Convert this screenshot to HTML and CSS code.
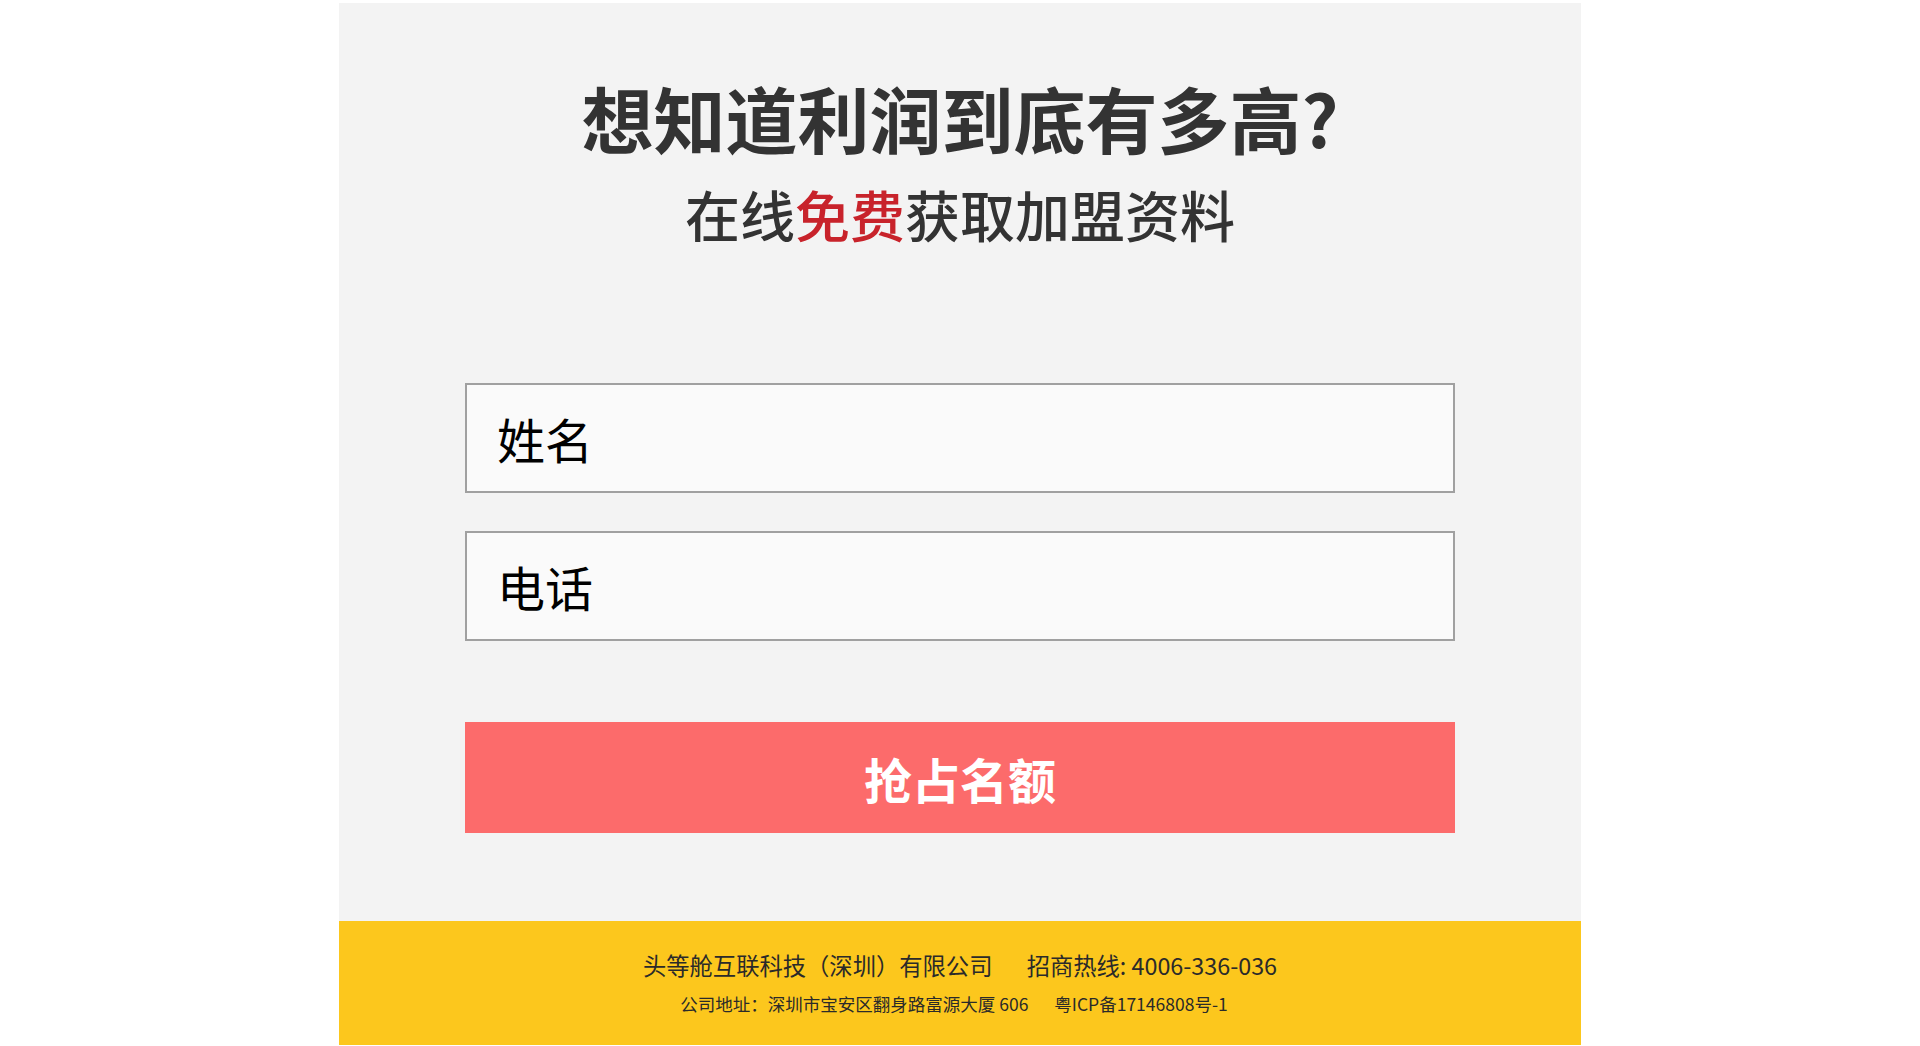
FILE: index.html
```html
<!DOCTYPE html>
<html lang="zh-CN">
<head>
    <meta charset="UTF-8">
    <meta name="viewport" content="width=device-width, initial-scale=1.0">
    <title>免费获取加盟资料</title>
    <link rel="stylesheet" href="styles.css">
</head>
<body>
    <div class="page">
        <div class="apply">
            <h1 class="apply-title">想知道利润到底有多高?</h1>
            <h2 class="apply-sub">在线<span class="free">免费</span>获取加盟资料</h2>

            <form class="apply-form" id="applyForm">
                <input class="field" type="text" id="userName" placeholder="姓名">
                <input class="field" type="tel" id="userPhone" placeholder="电话">
                <button class="submit-btn" type="submit">抢占名额</button>
            </form>
        </div>

        <div class="footer">
            <p class="footer-main">
                <span>头等舱互联科技（深圳）有限公司</span>
                <span class="sep">招商热线: 4006-336-036</span>
            </p>
            <p class="footer-sub">
                <span>公司地址：深圳市宝安区翻身路富源大厦 606</span>
                <span class="sep-sm">粤ICP备17146808号-1</span>
            </p>
        </div>
    </div>

    <script>
        // Simple check before submit
        document.getElementById('applyForm').addEventListener('submit', function (event) {
            event.preventDefault();
            const name = document.getElementById('userName').value.trim();
            const phone = document.getElementById('userPhone').value.trim();
            if (!name || !phone) {
                alert('请填写姓名和电话');
                return;
            }
            alert('提交成功，我们会尽快联系您！');
        });
    </script>
</body>
</html>
```

FILE: styles.css
```css
body {
    margin: 0;
    background-color: #fff;
    font-family: "Noto Sans CJK SC", "Noto Sans", sans-serif;
    color: #333;
}
.page {
    width: 1242px;
    margin: 3px auto 0;
    background-color: #f3f3f3;
}
.apply {
    padding: 74px 0 88px;
    text-align: center;
}
.apply-title {
    margin: 0;
    font-size: 72px;
    line-height: 80px;
    font-weight: 700;
    color: #333;
}
.apply-sub {
    margin: 21px 0 0;
    font-size: 55px;
    line-height: 70px;
    font-weight: 500;
    color: #333;
}
.free {
    color: #c8232b;
}
.apply-form {
    width: 990px;
    margin: 135px auto 0;
    display: flex;
    flex-direction: column;
}
.field {
    box-sizing: border-box;
    height: 110px;
    margin: 0 0 38px;
    padding: 0 30px;
    border: 2px solid #a0a0a0;
    border-radius: 0;
    background-color: #fafafa;
    font-family: inherit;
    font-size: 48px;
    color: #000;
    outline: none;
}
.field::placeholder {
    color: #000;
    opacity: 1;
}
.submit-btn {
    height: 111px;
    margin-top: 43px;
    border: none;
    background-color: #fc6b6b;
    color: #fff;
    font-family: inherit;
    font-size: 48px;
    font-weight: 700;
    cursor: pointer;
}
.footer {
    background-color: #fcc71d;
    padding: 29px 0 29px;
    text-align: center;
    color: #2a2a2a;
}
.footer p {
    margin: 0;
}
.footer-main {
    font-size: 23.3px;
    line-height: 30px;
}
.footer-sub {
    margin-top: 12px !important;
    padding-right: 12px;
    font-size: 17.5px;
    line-height: 24px;
}
.sep {
    margin-left: 29px;
}
.sep-sm {
    margin-left: 22px;
}
```
